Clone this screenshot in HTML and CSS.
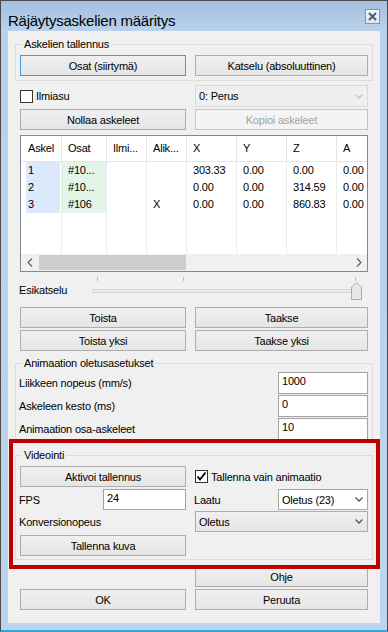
FILE: index.html
```html
<!DOCTYPE html>
<html lang="fi">
<head>
  <meta charset="UTF-8" />
  <title>Räjäytysaskelien määritys</title>
  <link rel="stylesheet" href="styles.css">
</head>
<body>
  <div class="window">
    <div class="titlebar">
      <span class="title">Räjäytysaskelien määritys</span>
      <span class="close">
        <svg width="9" height="9" viewBox="0 0 9 9"><path d="M1 1L8 8M8 1L1 8" stroke="#4f5e73" stroke-width="2"/></svg>
      </span>
    </div>

    <div class="client">
      <!-- Askelien tallennus -->
      <div class="group g1">
        <div class="legend">Askelien tallennus</div>
        <div class="cols">
          <button class="btn focus">Osat (siirtymä)</button>
          <button class="btn">Katselu (absoluuttinen)</button>
        </div>
      </div>

      <div class="row cols r-ilmiasu">
        <label class="check"><span class="box"></span>Ilmiasu</label>
        <div class="combo dis">
          <span>0: Perus</span>
          <svg width="8" height="5" viewBox="0 0 8 5"><polyline points="0.5,0.5 4,4 7.5,0.5" fill="none" stroke="#c2c2c2" stroke-width="1.3"/></svg>
        </div>
      </div>

      <div class="row cols r-nollaa">
        <button class="btn">Nollaa askeleet</button>
        <button class="btn dis">Kopioi askeleet</button>
      </div>

      <!-- Askellista -->
      <div class="row list">
        <div class="lv-head">
          <div class="lv-h first">Askel</div>
          <div class="lv-h">Osat</div>
          <div class="lv-h">Ilmi...</div>
          <div class="lv-h">Alik...</div>
          <div class="lv-h">X</div>
          <div class="lv-h">Y</div>
          <div class="lv-h">Z</div>
          <div class="lv-h">A</div>
        </div>
        <div class="lv-body">
          <div class="lv-col c1"><div class="lv-cell">1</div><div class="lv-cell">2</div><div class="lv-cell">3</div></div>
          <div class="lv-col c2"><div class="lv-cell">#10...</div><div class="lv-cell">#10...</div><div class="lv-cell">#106</div></div>
          <div class="lv-col"><div class="lv-cell"></div><div class="lv-cell"></div><div class="lv-cell"></div></div>
          <div class="lv-col"><div class="lv-cell"></div><div class="lv-cell"></div><div class="lv-cell">X</div></div>
          <div class="lv-col"><div class="lv-cell">303.33</div><div class="lv-cell">0.00</div><div class="lv-cell">0.00</div></div>
          <div class="lv-col"><div class="lv-cell">0.00</div><div class="lv-cell">0.00</div><div class="lv-cell">0.00</div></div>
          <div class="lv-col"><div class="lv-cell">0.00</div><div class="lv-cell">314.59</div><div class="lv-cell">860.83</div></div>
          <div class="lv-col"><div class="lv-cell">0.00</div><div class="lv-cell">0.00</div><div class="lv-cell">0.00</div></div>
        </div>
        <div class="hscroll">
          <span class="arrow"><svg width="6" height="9" viewBox="0 0 6 9"><polyline points="5,0.5 1,4.5 5,8.5" fill="none" stroke="#606060" stroke-width="1.2"/></svg></span>
          <span class="thumb"></span>
          <span class="fill"></span>
          <span class="arrow"><svg width="6" height="9" viewBox="0 0 6 9"><polyline points="1,0.5 5,4.5 1,8.5" fill="none" stroke="#606060" stroke-width="1.2"/></svg></span>
        </div>
      </div>

      <!-- Esikatselu -->
      <div class="row slider">
        <span class="lbl">Esikatselu</span>
        <div class="track-area">
          <span class="tick" style="left: 5px"></span>
          <span class="tick" style="left: 91px"></span>
          <span class="tick" style="left: 263px"></span>
          <span class="track"></span>
          <svg class="knob" width="11" height="18" viewBox="0 0 11 18">
            <polygon points="0.5,5 5.5,0.5 10.5,5 10.5,17.5 0.5,17.5" fill="#e6e6e6" stroke="#acacac"/>
          </svg>
        </div>
      </div>

      <div class="row cols r-toista">
        <button class="btn">Toista</button>
        <button class="btn">Taakse</button>
      </div>
      <div class="row cols r-yksi">
        <button class="btn">Toista yksi</button>
        <button class="btn">Taakse yksi</button>
      </div>

      <!-- Animaation oletusasetukset -->
      <div class="group g2">
        <div class="legend">Animaation oletusasetukset</div>
        <div class="field first">
          <span class="lbl">Liikkeen nopeus (mm/s)</span>
          <span class="tb">1000</span>
        </div>
        <div class="field">
          <span class="lbl">Askeleen kesto (ms)</span>
          <span class="tb">0</span>
        </div>
        <div class="field">
          <span class="lbl">Animaation osa-askeleet</span>
          <span class="tb">10</span>
        </div>
      </div>

      <!-- Videointi -->
      <div class="group g3">
        <div class="legend">Videointi</div>
        <div class="cols v1">
          <button class="btn">Aktivoi tallennus</button>
          <label class="check">
            <span class="box">
              <svg width="11" height="11" viewBox="0 0 11 11"><polyline points="1.5,5.5 4,8.5 9.5,1.5" fill="none" stroke="#000" stroke-width="1.8"/></svg>
            </span>Tallenna vain animaatio
          </label>
        </div>
        <div class="cols v2">
          <div class="pair">
            <span class="lbl">FPS</span>
            <span class="tb fps">24</span>
          </div>
          <div class="pair">
            <span class="lbl">Laatu</span>
            <div class="combo white laatu">
              <span>Oletus (23)</span>
              <svg width="8" height="5" viewBox="0 0 8 5"><polyline points="0.5,0.5 4,4 7.5,0.5" fill="none" stroke="#555" stroke-width="1.3"/></svg>
            </div>
          </div>
        </div>
        <div class="cols v3">
          <div class="pair"><span class="lbl">Konversionopeus</span></div>
          <div class="combo plain">
            <span>Oletus</span>
            <svg width="8" height="5" viewBox="0 0 8 5"><polyline points="0.5,0.5 4,4 7.5,0.5" fill="none" stroke="#555" stroke-width="1.3"/></svg>
          </div>
        </div>
        <div class="cols v4">
          <button class="btn">Tallenna kuva</button>
        </div>
      </div>

      <div class="row cols r-ohje">
        <span></span>
        <button class="btn">Ohje</button>
      </div>
      <div class="row cols r-ok">
        <button class="btn">OK</button>
        <button class="btn">Peruuta</button>
      </div>

      <!-- korostus -->
      <div class="mark"></div>
    </div>
  </div>
</body>
</html>
```

FILE: styles.css
```css
* {
  box-sizing: border-box;
}
body {
  margin: 0;
  font-family: "Liberation Sans", Arial, sans-serif;
  font-size: 11px;
  letter-spacing: -0.2px;
  color: #000;
}
/* Ikkunan kehys */
.window {
  width: 388px;
  height: 632px;
  border: 1px solid #4b4b4b;
  border-bottom: 2px solid #2aa9d8;
  background: linear-gradient(#a4c0e0, #b9d1ea 30px, #bcd4ec);
  padding: 0 7px;
}
.titlebar {
  height: 30px;
  display: flex;
  justify-content: space-between;
  align-items: flex-start;
}
.title {
  font-size: 15px;
  line-height: 16px;
  margin-top: 12px;
  letter-spacing: -0.25px;
}
.close {
  margin-top: 8px;
  width: 15px;
  height: 15px;
  border: 1px solid #8194aa;
  background: linear-gradient(#f3f6fa, #dde6f0);
  display: flex;
  align-items: center;
  justify-content: center;
}
.client {
  display: flow-root;
  position: relative;
  height: 592px;
  background: #f0f0f0;
}
/* Ryhmät */
.group {
  margin: 0 7px;
  border: 1px solid #dcdcdc;
  padding: 0 4px 4px;
}
.g1 { margin-top: 13px; }
.g2 { margin-top: 12px; padding-bottom: 1px; }
.g3 { margin-top: 13px; padding-bottom: 3px; }
.legend {
  width: max-content;
  margin: -7px 0 0 2px;
  padding: 0 2px;
  line-height: 12px;
  background: #f0f0f0;
}
.row {
  margin: 0 12px;
}
.cols {
  display: grid;
  grid-template-columns: 166px 173px;
  column-gap: 9px;
}
.g1 .cols, .v1, .v4 { margin-top: 5px; }
.r-ilmiasu { margin-top: 4px; height: 22px; }
.r-nollaa { margin-top: 2px; }
.r-toista { margin-top: 3px; }
.r-yksi { margin-top: 2px; }
.r-ohje { margin-top: 6px; }
.r-ok { margin-top: 2px; }
.v2 { margin-top: 2px; height: 21px; }
.v3 { margin-top: 1px; height: 21px; }
.v4 { margin-top: 3px; }
/* Painikkeet */
.btn {
  height: 21px;
  padding: 0;
  font: inherit;
  letter-spacing: inherit;
  color: #000;
  border: 1px solid #adadad;
  background: linear-gradient(#f0f0f0, #e5e5e5);
}
.btn.focus {
  border-color: #4d98d8;
}
.btn.dis {
  border-color: #c6c6c6;
  background: #f4f4f4;
  color: #a2a2a2;
}
.check {
  display: flex;
  align-items: center;
  gap: 3px;
}
.box {
  flex: none;
  width: 13px;
  height: 13px;
  border: 1px solid #333;
  background: #fff;
  display: flex;
}
.lbl {
  margin-left: -1px;
}
/* Pudotusvalikot */
.combo {
  display: flex;
  align-items: center;
  justify-content: space-between;
  height: 22px;
  padding: 0 4px 0 3px;
  border: 1px solid #acacac;
}
.combo.dis {
  background: #efefef;
  border-color: #d9d9d9;
}
.combo.white {
  background: #fff;
  border-color: #a8a8a8;
  height: 21px;
}
.combo.plain {
  background: linear-gradient(#f0f0f0, #e5e5e5);
  height: 21px;
}
.laatu {
  width: 90px;
  margin-left: auto;
}
/* Luettelo */
.list {
  margin-top: 5px;
  height: 137px;
  border: 1px solid #828790;
  background: #fff;
  overflow: hidden;
}
.lv-head, .lv-body {
  display: grid;
  grid-template-columns: 41px 45px 40px 40px 50px 50px 50px 50px;
}
.lv-head {
  height: 26px;
  border-bottom: 1px solid #e5e5e5;
}
.lv-h {
  padding-left: 6px;
  line-height: 25px;
  border-right: 1px solid #e5e5e5;
  white-space: nowrap;
}
.lv-h.first {
  padding-left: 7px;
}
.lv-body {
  height: 92px;
}
.lv-col {
  border-right: 1px solid #e9eef5;
}
.lv-cell {
  height: 17px;
  line-height: 17px;
  padding-left: 6px;
  white-space: nowrap;
}
.c1 .lv-cell {
  margin: 0 1px 0 5px;
  padding-left: 2px;
  background: #dce8fc;
}
.c2 .lv-cell {
  background: #e3f4e8;
}
.hscroll {
  height: 17px;
  display: flex;
  align-items: center;
  background: #f0f0f0;
}
.arrow {
  width: 17px;
  height: 17px;
  display: flex;
  align-items: center;
  justify-content: center;
}
.thumb {
  width: 147px;
  height: 15px;
  margin-left: 1px;
  background: #cdcdcd;
}
.fill {
  flex: 1;
}
/* Liukusäädin */
.slider {
  margin-top: 4px;
  height: 28px;
  display: flex;
  align-items: center;
}
.slider .lbl {
  width: 73px;
}
.track-area {
  position: relative;
  flex: 1;
  height: 28px;
}
.tick {
  position: absolute;
  top: 1px;
  width: 1px;
  height: 4px;
  background: #bdbdbd;
}
.track {
  position: absolute;
  left: 0;
  top: 13px;
  width: 269px;
  height: 4px;
  border: 1px solid #d6d6d6;
  background: #e7eaea;
}
.knob {
  position: absolute;
  left: 259px;
  top: 6px;
}
/* Tekstikentät */
.field {
  display: flex;
  align-items: center;
  height: 22px;
  margin-top: 1px;
}
.field.first {
  margin-top: 3px;
}
.tb {
  width: 90px;
  height: 22px;
  margin-left: auto;
  padding: 2px 0 0 3px;
  line-height: 13px;
  border: 1px solid #a3a3a3;
  background: #fff;
}
.tb.fps {
  width: 83px;
  height: 21px;
}
.pair {
  display: flex;
  align-items: center;
}
/* Punainen korostus */
.mark {
  position: absolute;
  left: 1px;
  top: 408px;
  width: 371px;
  height: 130px;
  border: 4px solid #c00000;
}
```
